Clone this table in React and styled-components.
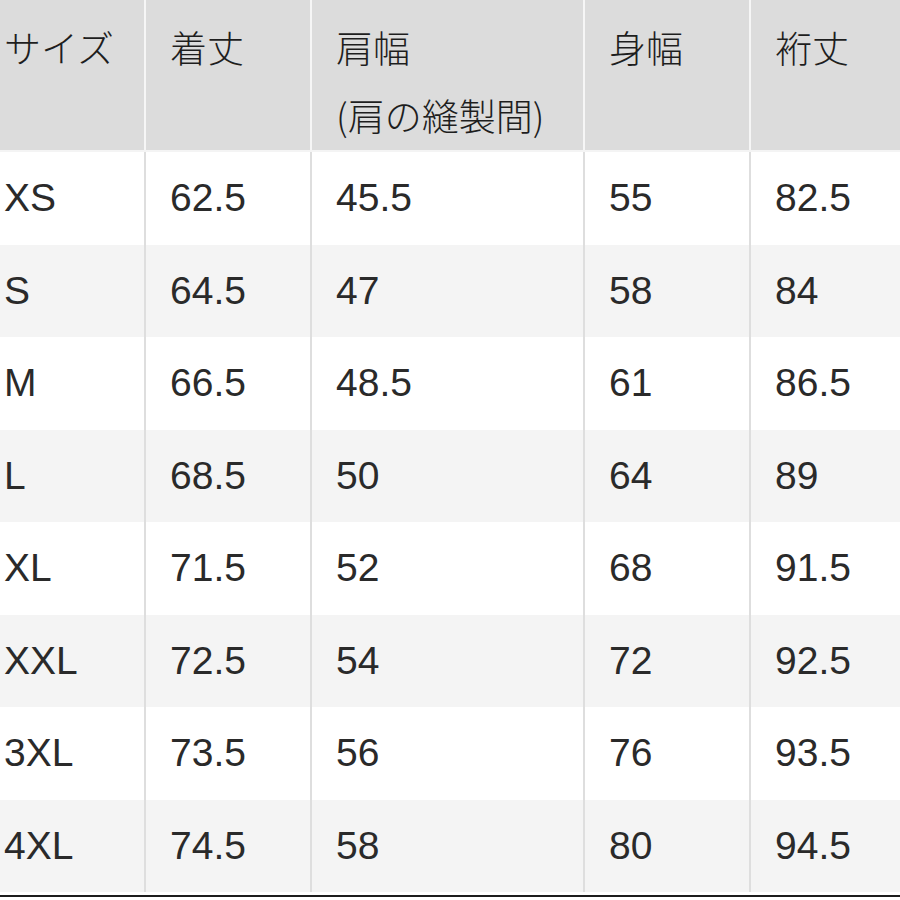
import React from "react";
import styled, { createGlobalStyle } from "styled-components";

const GlobalStyle = createGlobalStyle`
  html, body {
    margin: 0;
    padding: 0;
    background: #ffffff;
  }
  body {
    font-family: "Liberation Sans", "Noto Sans CJK JP", sans-serif;
    color: #222;
  }
`;

const headers = [["サイズ"], ["着丈"], ["肩幅", "(肩の縫製間)"], ["身幅"], ["裄丈"]];

const rows = [
  ["XS", "62.5", "45.5", "55", "82.5"],
  ["S", "64.5", "47", "58", "84"],
  ["M", "66.5", "48.5", "61", "86.5"],
  ["L", "68.5", "50", "64", "89"],
  ["XL", "71.5", "52", "68", "91.5"],
  ["XXL", "72.5", "54", "72", "92.5"],
  ["3XL", "73.5", "56", "76", "93.5"],
  ["4XL", "74.5", "58", "80", "94.5"],
];

function App() {
  return (
    <>
      <GlobalStyle />
      <Page>
        <Table>
          <HeadRow>
            {headers.map((lines, i) => (
              <HeadCell key={i} $first={i === 0}>
                {lines.map((l) => (
                  <div key={l}>{l}</div>
                ))}
              </HeadCell>
            ))}
          </HeadRow>
          {rows.map((r, ri) => (
            <Row key={r[0]} $alt={ri % 2 === 1}>
              {r.map((v, ci) => (
                <Cell key={ci} $first={ci === 0}>
                  {v}
                </Cell>
              ))}
            </Row>
          ))}
        </Table>
        <BottomRule />
      </Page>
    </>
  );
}

export default App;

const Page = styled.div`
  width: 900px;
  height: 900px;
  overflow: hidden;
  background: #fff;
`;

const Table = styled.div`
  display: flex;
  flex-direction: column;
`;

const cols = "144px 166px 273px 166px 1fr";

const HeadRow = styled.div`
  display: grid;
  grid-template-columns: ${cols};
  height: 150px;
  background: #dcdcdc;
  border-bottom: 2px solid #f4f4f4;
`;

const HeadCell = styled.div`
  font-family: "Noto Sans CJK JP", "Liberation Sans", sans-serif;
  font-size: 37px;
  font-weight: 300;
  line-height: 68px;
  padding-top: 13px;
  padding-left: ${(p) => (p.$first ? "4px" : "24px")};
  border-left: ${(p) => (p.$first ? "none" : "2px solid #f6f6f6")};
  white-space: nowrap;
  color: #1e1e1e;
`;

const Row = styled.div`
  display: grid;
  grid-template-columns: ${cols};
  height: 92.5px;
  background: ${(p) => (p.$alt ? "#f4f4f4" : "#ffffff")};
`;

const Cell = styled.div`
  display: flex;
  align-items: center;
  font-size: 39px;
  padding-left: ${(p) => (p.$first ? "4px" : "24px")};
  border-left: ${(p) => (p.$first ? "none" : "2px solid #dedede")};
  color: #2a2a2a;
`;

const BottomRule = styled.div`
  margin-top: 3px;
  height: 2px;
  background: #1c1c1c;
`;
